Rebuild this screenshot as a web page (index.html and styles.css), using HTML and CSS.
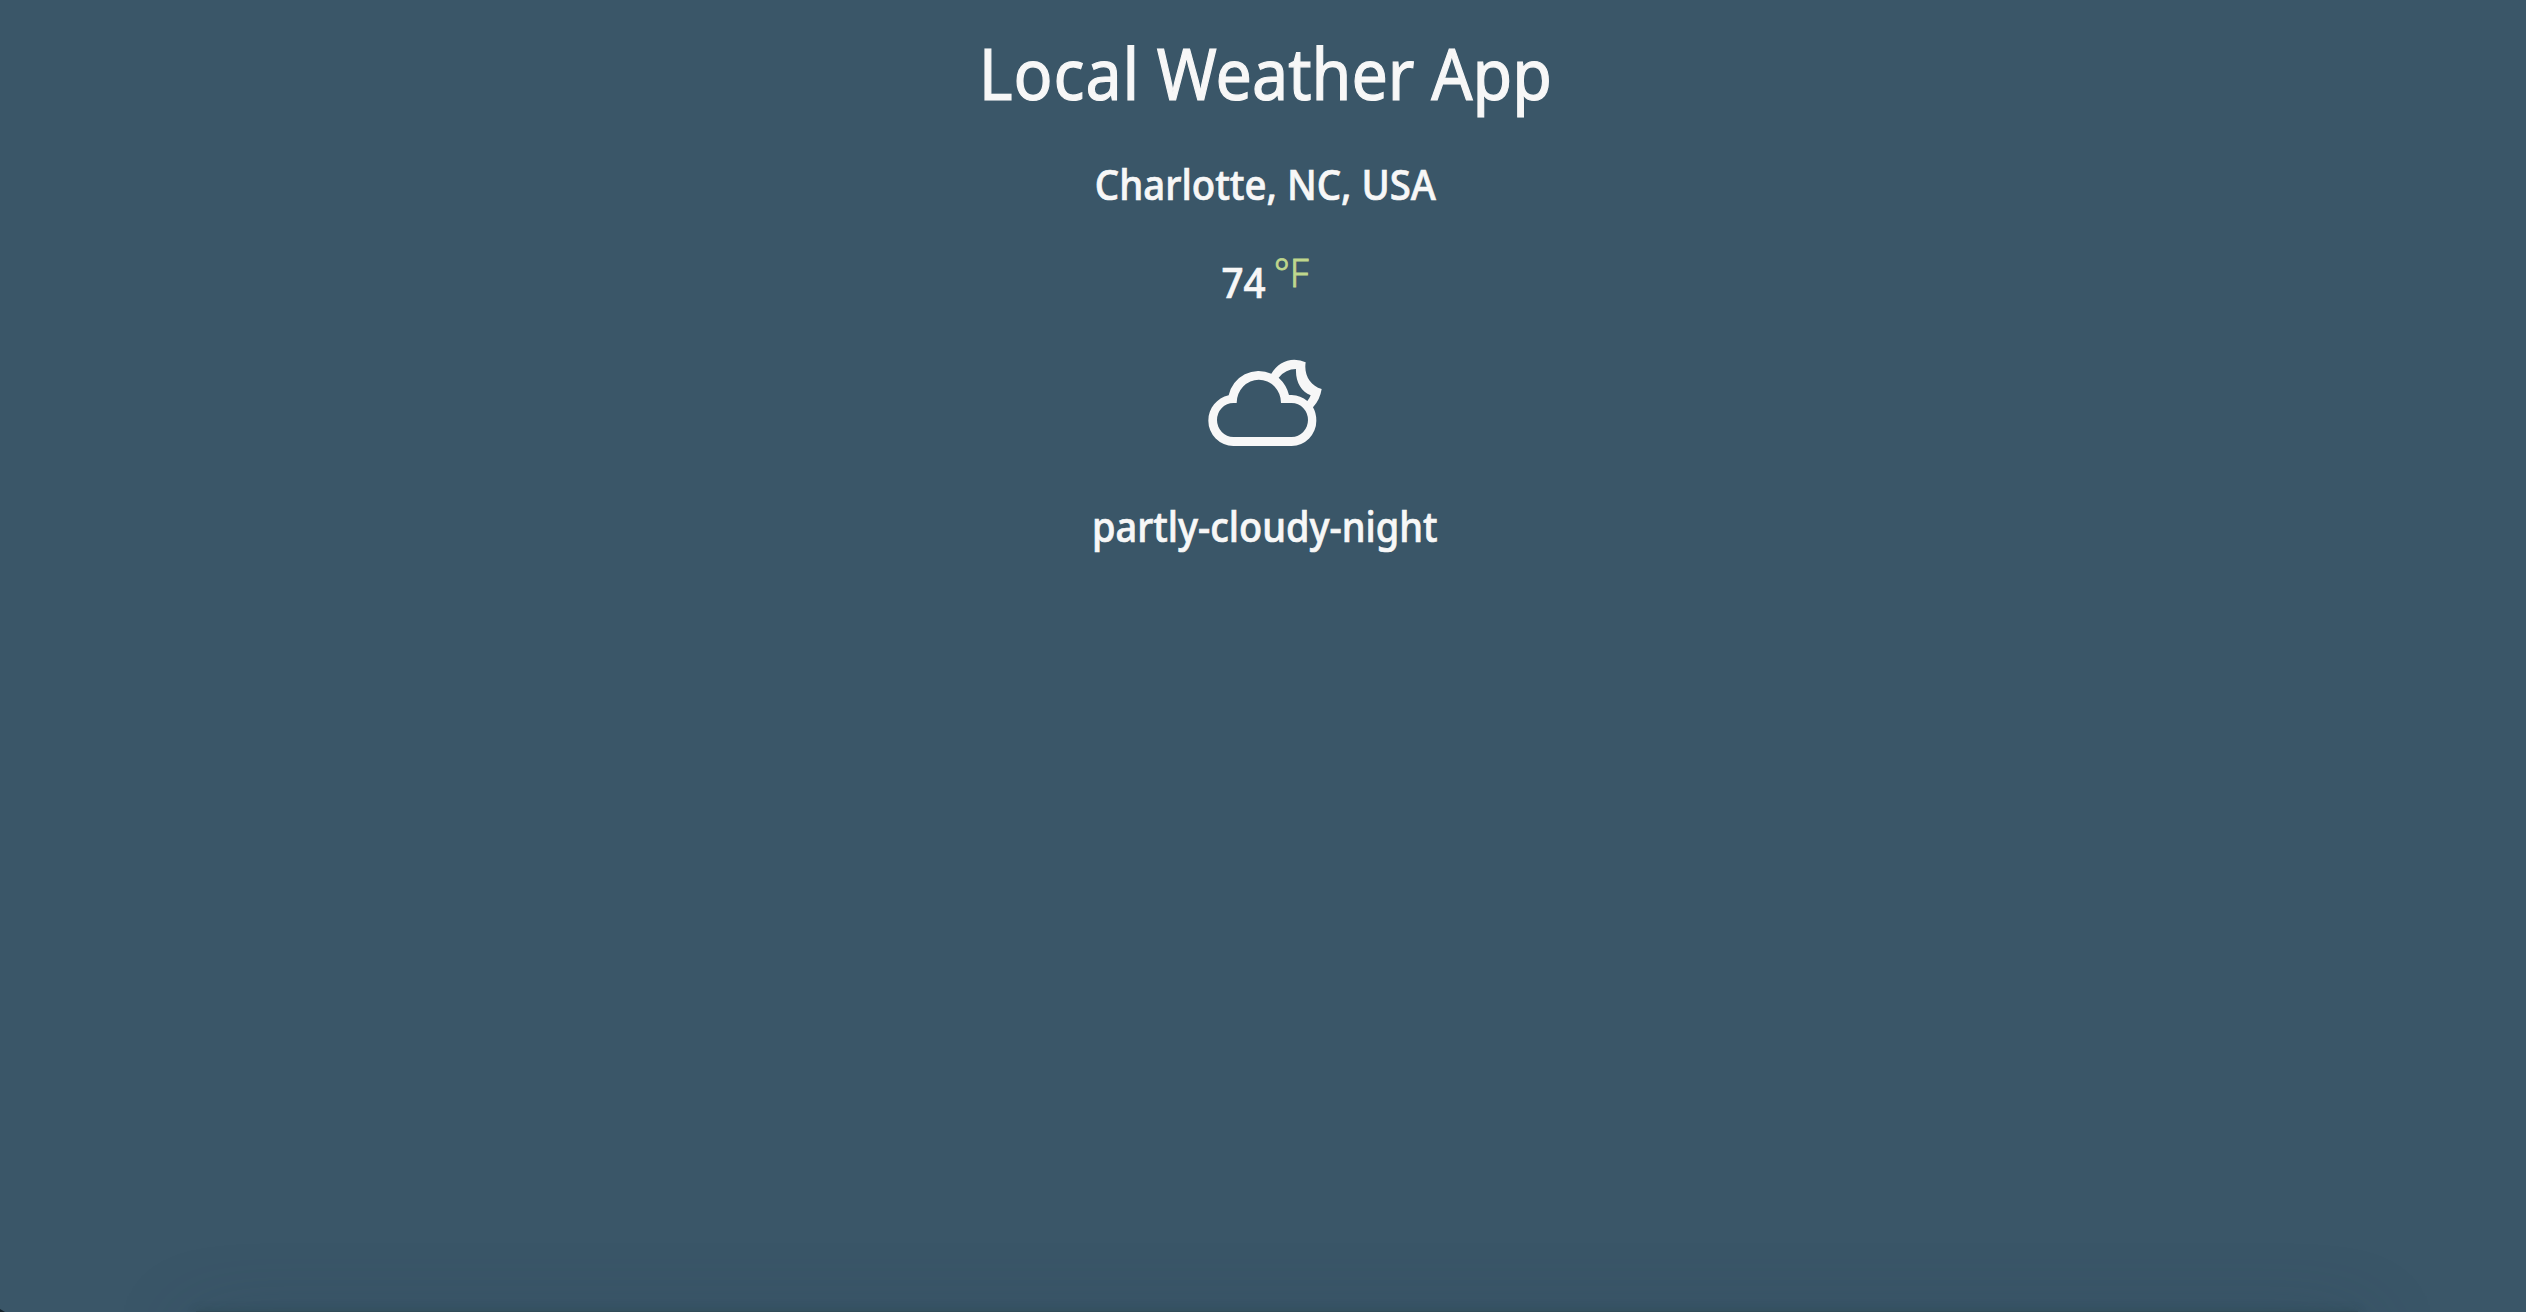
FILE: index.html
```html
<!DOCTYPE html>
<html lang="en">
<head>
<meta charset="utf-8">
<title>Local Weather App</title>
<link rel="stylesheet" href="styles.css">
</head>
<body>
<main class="weather">
  <h1 class="title"><span class="title-text"><span class="first-word">Local</span> Weather App</span></h1>
  <p class="location"><span class="location-text">Charlotte, NC, USA</span></p>
  <p class="temperature"><span class="degrees">74</span><span class="unit">°F</span></p>
  <svg class="icon" viewBox="0 0 420 330" role="img" aria-label="partly cloudy night">
    <path fill-rule="evenodd" d="M115 303A75 76 0 0 1 40 227C40 190 66 159 101 151A92 92 0 0 1 229 86C244 60 269 44 298 44Q317 44 332 52C326 89 346 122 380 132Q375 164 354 187Q364 204 364 227A75 76 0 0 1 290 303ZM115 276H290A49 51 0 0 0 290 174H258A66.5 70 0 0 0 125 174H115A49 51 0 0 0 115 276ZM251 98Q275 120 282 150H290Q317 151 337 168Q344 160 347 151C319 139 301 111 303 72Q272 72 251 98Z"/>
  </svg>
  <p class="summary"><span class="summary-text">partly-cloudy-night</span></p>
</main>
<div class="edge-shadow"></div>
<div class="corner"></div>
</body>
</html>
```
FILE: styles.css
```css
* { box-sizing: border-box; }
body {
  margin: 0;
  height: 1312px;
  overflow: hidden;
  background: #3a5668;
  color: #f7f7f7;
  font-family: "Noto Sans", "Open Sans", sans-serif;
}
.weather {
  display: flex;
  flex-direction: column;
  align-items: center;
  padding: 23px 0 0 4px;
}
.title, .location, .temperature, .summary {
  margin: 0;
  font-weight: 500;
  white-space: nowrap;
  -webkit-text-stroke: .7px currentColor;
}
.title { height: 100px; font-size: 71.5px; line-height: 100px; font-weight: 400; -webkit-text-stroke-width: 1.2px; }
.title-text { display: inline-block; transform: scaleX(.903); }
.first-word { letter-spacing: 1px; }
.location { height: 56px; margin-top: 33px; font-size: 41px; line-height: 56px; }
.location-text { display: inline-block; transform: scaleX(.935); }
.summary-text { display: inline-block; transform: scaleX(.925); }
.temperature { display: flex; gap: 6px; height: 60px; margin-top: 42px; font-size: 41px; line-height: 56px; }
.degrees { transform: scaleX(.94); }
.unit { margin: -10px 0 0; color: #bfd78d; font-size: 39px; font-weight: 300; transform: scaleX(.96); -webkit-text-stroke-width: .9px; }
.icon { width: 140px; height: 110px; margin-top: 31px; fill: #f7f7f7; }
.summary { height: 56px; margin-top: 43px; font-size: 41px; line-height: 56px; }
.edge-shadow {
  position: fixed;
  right: 168px;
  bottom: -40px;
  left: 196px;
  height: 41px;
  background: #324b58;
  box-shadow: 0 0 8px rgba(35, 65, 65, .35), 0 20px 80px rgba(45, 65, 85, .38);
}
.corner {
  position: fixed;
  bottom: 0;
  left: 0;
  width: 5px;
  height: 3px;
  background: #16232c;
  clip-path: polygon(0 0, 100% 100%, 0 100%);
}
```
